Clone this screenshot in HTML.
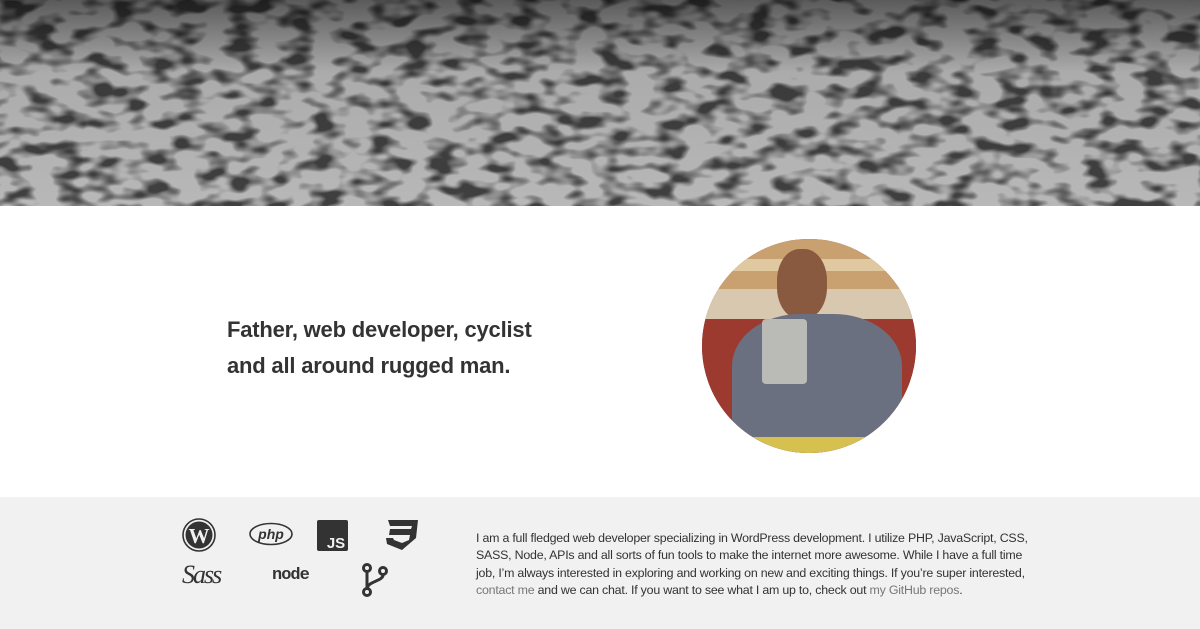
<!DOCTYPE html>
<html><head><style>
body{margin:0;width:1200px;height:629px;overflow:hidden;background:#fff;font-family:"Liberation Sans",sans-serif;position:relative}
.hero{position:absolute;left:0;top:0;width:1200px;height:206px;overflow:hidden;background:#6a6a6a}
h1{position:absolute;left:227px;top:312px;margin:0;font-size:22px;line-height:36px;color:#333;font-weight:bold;letter-spacing:-0.2px}
.av{position:absolute;left:702px;top:239px;width:214px;height:214px;border-radius:50%;overflow:hidden;background:#8a3a30}
.foot{position:absolute;left:0;top:497px;width:1200px;height:132px;background:#f1f1f1}
p{position:absolute;left:476px;top:530px;width:560px;margin:0;font-size:12.4px;line-height:17.3px;color:#333;letter-spacing:-0.22px}
a{color:#777;text-decoration:none}
.ic{position:absolute}
</style></head><body>
<div class="hero">
<svg width="1200" height="206">
<defs>
<filter id="t" x="0" y="0" width="100%" height="100%">
<feTurbulence type="fractalNoise" baseFrequency="0.035 0.07" numOctaves="2" seed="4"/>
<feColorMatrix type="matrix" values="0 0 0 0 0  0 0 0 0 0  0 0 0 0 0  0 0 0 -4 2.2"/>
</filter>
<linearGradient id="g" x1="0" y1="0" x2="0" y2="1"><stop offset="0" stop-color="#5a5a5a"/><stop offset=".35" stop-color="#ababab"/><stop offset="1" stop-color="#b8b8b8"/></linearGradient>
</defs>
<rect width="1200" height="206" fill="url(#g)"/>
<rect width="1200" height="206" fill="#222" filter="url(#t)" opacity=".65"/>
</svg>
</div>
<h1>Father, web developer, cyclist<br>and all around rugged man.</h1>
<div class="av">
<div style="position:absolute;left:0;top:0;width:214px;height:70px;background:#c9a070"></div>
<div style="position:absolute;left:0;top:20px;width:214px;height:12px;background:#e0c9a0"></div>
<div style="position:absolute;left:0;top:50px;width:214px;height:30px;background:#d8c8b0"></div>
<div style="position:absolute;left:0;top:80px;width:214px;height:134px;background:#9c3a30"></div>
<div style="position:absolute;left:75px;top:10px;width:50px;height:70px;border-radius:45%;background:#8a5a40"></div>
<div style="position:absolute;left:30px;top:75px;width:170px;height:130px;border-radius:40% 40% 0 0;background:#6a7080"></div>
<div style="position:absolute;left:60px;top:80px;width:45px;height:65px;background:#c8c8c0;opacity:.85;border-radius:4px"></div>
<div style="position:absolute;left:0;top:198px;width:214px;height:16px;background:#d6c050"></div>
</div>
<div class="foot"></div>
<svg class="ic" style="left:182px;top:518px" width="34" height="34" viewBox="0 0 34 34"><circle cx="17" cy="17" r="16" fill="none" stroke="#333" stroke-width="1.6"/><circle cx="17" cy="17" r="13.5" fill="#333"/><text x="17" y="25" font-size="21" font-weight="bold" fill="#f1f1f1" text-anchor="middle" font-family="Liberation Serif">W</text></svg>
<svg class="ic" style="left:249px;top:522px" width="44" height="24" viewBox="0 0 44 24"><ellipse cx="22" cy="12" rx="21" ry="10.5" fill="none" stroke="#333" stroke-width="1.6"/><text x="22" y="17" font-size="14" font-style="italic" font-weight="bold" fill="#333" text-anchor="middle">php</text></svg>
<svg class="ic" style="left:317px;top:520px" width="31" height="31"><rect width="31" height="31" rx="2" fill="#333"/><text x="19" y="28" font-size="15" font-weight="bold" fill="#f1f1f1" text-anchor="middle">JS</text></svg>
<svg class="ic" style="left:385px;top:520px" width="33" height="30" viewBox="0 0 33 30"><path d="M3 0H33L31 18 17 30 2 24 1 18H8L9 20 17 23 24 20 25 15H4L5 9H26L27 6H5Z" fill="#333"/></svg>
<div class="ic" style="left:182px;top:560px;font:italic 26px 'Liberation Serif',serif;color:#333;letter-spacing:-2px">Sass</div>
<div class="ic" style="left:272px;top:566px;font:bold 17px 'Liberation Mono',monospace;color:#333;letter-spacing:-1px">node</div>
<svg class="ic" style="left:361px;top:563px" width="28" height="34" viewBox="0 0 28 34"><g fill="none" stroke="#333" stroke-width="3"><circle cx="6" cy="5" r="3.5"/><circle cx="6" cy="29" r="3.5"/><circle cx="22" cy="8" r="3.5"/><path d="M6 9V25M22 12C22 18 8 18 6 25"/></g></svg>
<p>I am a full fledged web developer specializing in WordPress development. I utilize PHP, JavaScript, CSS, SASS, Node, APIs and all sorts of fun tools to make the internet more awesome. While I have a full time job, I’m always interested in exploring and working on new and exciting things. If you’re super interested, <a>contact me</a> and we can chat. If you want to see what I am up to, check out <a>my GitHub repos</a>.</p>
</body></html>
